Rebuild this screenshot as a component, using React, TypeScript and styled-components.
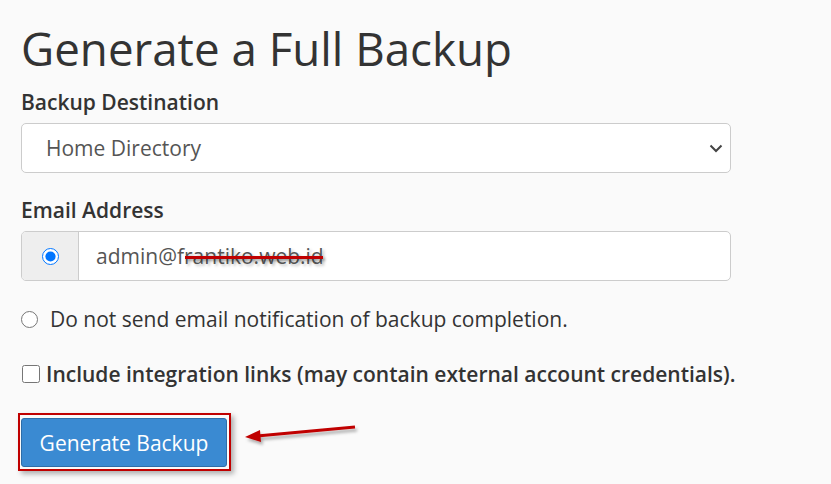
import React from "react";
import styled, { createGlobalStyle } from "styled-components";

const Global = createGlobalStyle`
  html, body { margin: 0; padding: 0; background: #fafafa; }
  body { font-family: "Open Sans", "Noto Sans", sans-serif; color: #333; }
  * { box-sizing: border-box; }
`;

const Page = styled.div`
  padding: 20px 0 0 21px;
  width: 831px;
  height: 484px;
  overflow: hidden;
`;

const Title = styled.h1`
  margin: 0 0 12px;
  font-size: 45.7px;
  line-height: 56px;
  font-weight: 400;
  color: #333;
`;

const Label = styled.div<{ $gap?: number }>`
  margin-top: ${(p) => p.$gap ?? 0}px;
  font-size: 21px;
  line-height: 28px;
  font-weight: 600;
  color: #333;
`;

const SelectWrap = styled.div`
  position: relative;
  margin-top: 7px;
  width: 710px;
`;

const Select = styled.select`
  appearance: none;
  width: 100%;
  height: 50px;
  padding: 0 40px 0 24px;
  border: 1px solid #ccc;
  border-radius: 5px;
  background: #fff;
  font-family: inherit;
  font-size: 21px;
  color: #555;
  outline: none;
`;

const Chevron = styled.svg`
  position: absolute;
  right: 8px;
  top: 21px;
  pointer-events: none;
`;

const Group = styled.div`
  display: flex;
  margin-top: 7px;
  width: 710px;
  height: 50px;
  border: 1px solid #ccc;
  border-radius: 5px;
  overflow: hidden;
  background: #fff;
`;

const Addon = styled.div`
  flex: 0 0 57px;
  display: flex;
  align-items: center;
  justify-content: center;
  background: #eee;
  border-right: 1px solid #ccc;
`;

const Field = styled.div`
  flex: 1;
  display: flex;
  align-items: center;
  padding-left: 17px;
  font-size: 21px;
  color: #555;
`;

const Struck = styled.span`
  position: relative;
  text-shadow: 2px 2px 3px rgba(0, 0, 0, 0.25);
  &::after {
    content: "";
    position: absolute;
    left: 1px;
    right: 1px;
    top: 14px;
    height: 3px;
    background: #c00000;
    box-shadow: 2px 2px 3px rgba(0, 0, 0, 0.35);
  }
`;

const Radio = styled.input.attrs({ type: "radio" })`
  width: 17px;
  height: 17px;
  margin: 0;
  accent-color: #0075ff;
`;

const Check = styled.input.attrs({ type: "checkbox" })`
  width: 18px;
  height: 18px;
  margin: 0 0 0 1px;
`;

const OptionRow = styled.label<{ $gap: number; $bold?: boolean; $space: number }>`
  display: flex;
  align-items: center;
  gap: ${(p) => p.$space}px;
  margin-top: ${(p) => p.$gap}px;
  font-size: 21px;
  line-height: 28px;
  font-weight: ${(p) => (p.$bold ? 600 : 400)};
  color: #333;
`;

const ActionRow = styled.div`
  display: flex;
  align-items: flex-start;
  margin-top: 25px;
  margin-left: -3px;
`;

const Highlight = styled.div`
  border: 2px solid #c00000;
  padding: 3px 2px 2px 1px;
  box-shadow: 3px 3px 5px rgba(0, 0, 0, 0.3);
`;

const Button = styled.button`
  width: 206px;
  height: 49px;
  border: 1px solid #2d6da8;
  border-radius: 3px;
  background: #3a8ad2;
  color: #fff;
  font-family: inherit;
  font-size: 21px;
  padding: 0;
`;

const Arrow = styled.svg`
  margin-left: 12px;
  margin-top: 5px;
`;

export default function App() {
  return (
    <Page>
      <Global />
      <Title>Generate a Full Backup</Title>
      <Label>Backup Destination</Label>
      <SelectWrap>
        <Select defaultValue="home">
          <option value="home">Home Directory</option>
        </Select>
        <Chevron width="14" height="9" viewBox="0 0 14 9">
          <path d="M1.5 1.5 L7 7 L12.5 1.5" fill="none" stroke="#444" strokeWidth="2" />
        </Chevron>
      </SelectWrap>
      <Label $gap={23}>Email Address</Label>
      <Group>
        <Addon>
          <Radio name="notify" defaultChecked />
        </Addon>
        <Field>
          admin@f<Struck>rantiko.web.id</Struck>
        </Field>
      </Group>
      <OptionRow $gap={24} $space={12}>
        <Radio name="notify" />
        Do not send email notification of backup completion.
      </OptionRow>
      <OptionRow $gap={27} $bold $space={6}>
        <Check />
        Include integration links (may contain external account credentials).
      </OptionRow>
      <ActionRow>
        <Highlight>
          <Button>Generate Backup</Button>
        </Highlight>
        <Arrow width="120" height="30" viewBox="0 0 120 30">
          <defs>
            <filter id="sh" x="-20%" y="-50%" width="140%" height="200%">
              <feDropShadow dx="2" dy="3" stdDeviation="1.5" floodColor="#000" floodOpacity="0.3" />
            </filter>
          </defs>
          <g filter="url(#sh)">
            <line x1="112" y1="9" x2="14" y2="18" stroke="#c00000" strokeWidth="3" />
            <polygon points="2,19 17,12 18,24" fill="#c00000" />
          </g>
        </Arrow>
      </ActionRow>
    </Page>
  );
}
